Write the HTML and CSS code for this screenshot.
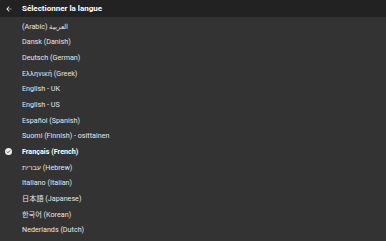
FILE: index.html
```html
<!DOCTYPE html>
<html lang="fr">
<head>
  <meta charset="UTF-8">
  <title>Sélectionner la langue</title>
  <link rel="stylesheet" href="styles.css">
</head>
<body>
  <div class="header">
    <svg class="back" viewBox="0 0 24 24" width="8" height="8"><path d="M20 11H7.83l5.59-5.59L12 4l-8 8 8 8 1.41-1.41L7.83 13H20v-2z" fill="#fff"/></svg>
    <div class="title">Sélectionner la langue</div>
  </div>
  <div class="list">
    <div class="item">(Arabic) العربية</div>
    <div class="item">Dansk (Danish)</div>
    <div class="item">Deutsch (German)</div>
    <div class="item">Ελληνική (Greek)</div>
    <div class="item">English - UK</div>
    <div class="item">English - US</div>
    <div class="item">Español (Spanish)</div>
    <div class="item">Suomi (Finnish) - osittainen</div>
    <div class="item selected">
      <svg class="check" viewBox="0 0 24 24" width="7" height="7"><circle cx="12" cy="12" r="12" fill="#eee"/><path d="M6.5 12.5l3.5 3.5 7.5-7.5" stroke="#333" stroke-width="3" fill="none"/></svg>
      Français (French)
    </div>
    <div class="item">עברית (Hebrew)</div>
    <div class="item">Italiano (Italian)</div>
    <div class="item">日本語 (Japanese)</div>
    <div class="item">한국어 (Korean)</div>
    <div class="item">Nederlands (Dutch)</div>
  </div>
</body>
</html>
```

FILE: styles.css
```css
body {
  margin: 0;
  background: #333333;
  font-family: Roboto, "Noto Sans CJK JP", "Noto Sans CJK KR", sans-serif;
  color: #e6e6e6;
  overflow: hidden;
}
.header {
  display: flex;
  align-items: center;
  height: 17px;
  background: #222222;
}
.back {
  margin-left: 5px;
  margin-right: 9px;
}
.title {
  font-size: 8px;
  font-weight: bold;
  color: #ffffff;
}
.list {
  display: flex;
  flex-direction: column;
  padding-top: 1.5px;
}
.item {
  position: relative;
  height: 15.7px;
  line-height: 15.7px;
  padding-left: 22px;
  font-size: 7.2px;
  white-space: nowrap;
}
.item.selected {
  font-weight: bold;
  color: #ffffff;
}
.check {
  position: absolute;
  left: 5px;
  top: 4.4px;
}
```
